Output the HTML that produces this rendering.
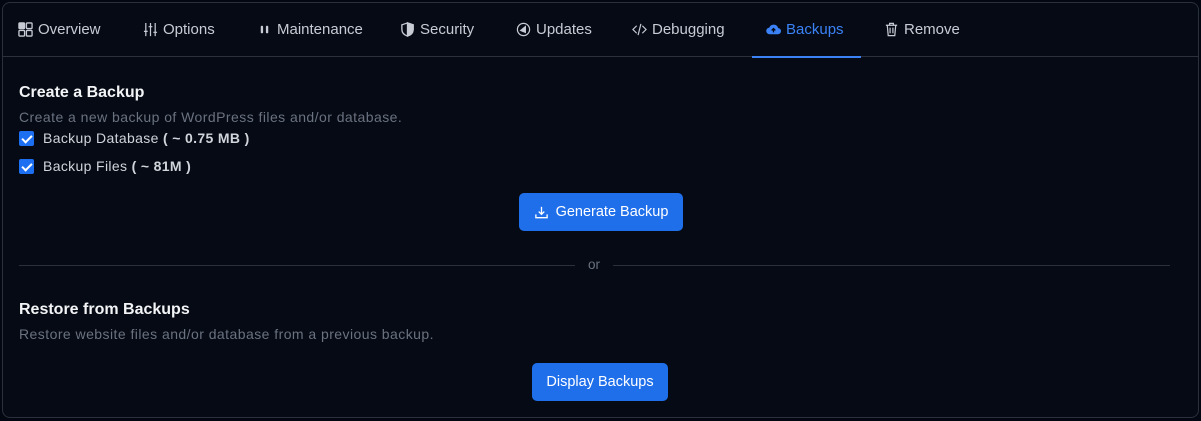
<!DOCTYPE html>
<html><head><style>
*{box-sizing:border-box;margin:0;padding:0}
body{width:1201px;height:421px;background:#030712;font-family:"Liberation Sans",sans-serif;overflow:hidden}
.card{position:absolute;left:2px;top:2px;width:1197px;height:416px;border:1px solid #2a313c;border-radius:8px;background:#050a14}
.tabs{position:absolute;left:0;top:0;width:100%;height:54px;border-bottom:1px solid #2a313c}
.tab{position:absolute;top:18px;font-size:15px;color:#c7ccd4;display:flex;align-items:center;gap:5px;white-space:nowrap}
.tab svg{width:15px;height:15px}
.active{color:#3b82f6}
.ul{position:absolute;left:749px;top:53px;width:109px;height:2px;background:#3b82f6}
h2{position:absolute;left:16px;font-size:16px;font-weight:bold;color:#f3f4f6}
.sub{position:absolute;left:16px;font-size:14px;letter-spacing:0.45px;color:#6b7280}
.cb{position:absolute;left:16px;font-size:14px;letter-spacing:0.35px;color:#d1d5db;display:flex;align-items:center;gap:9px}
.cb i{display:inline-block;width:15px;height:15px;background:#1d6ff2;border-radius:2px;position:relative}
.cb i:after{content:"";position:absolute;left:5px;top:2px;width:4px;height:8px;border:solid #fff;border-width:0 2px 2px 0;transform:rotate(45deg)}
.btn{position:absolute;background:#1f6feb;color:#fff;font-size:14.5px;border-radius:5px;display:flex;align-items:center;justify-content:center;gap:7px}
.hr{position:absolute;top:262px;height:1px;background:#2a313c}
</style></head><body>
<div class="card">
<div class="tabs">
<div class="tab" style="left:15px"><svg viewBox="0 0 16 16" fill="none" stroke="#c7ccd4" stroke-width="1.4"><rect x="1" y="1" width="6" height="6" rx="1" fill="#c7ccd4"/><rect x="9" y="1" width="6" height="6" rx="1"/><rect x="1" y="9" width="6" height="6" rx="1"/><rect x="9" y="9" width="6" height="6" rx="1"/></svg>Overview</div>
<div class="tab" style="left:140px"><svg viewBox="0 0 16 16" fill="none" stroke="#c7ccd4" stroke-width="1.3"><path d="M3 1v14M8 1v14M13 1v14M1 10h4M6 5h4M11 11h4"/></svg>Options</div>
<div class="tab" style="left:254px"><svg viewBox="0 0 16 16" fill="#c7ccd4"><rect x="4" y="4" width="2.5" height="8" rx="1"/><rect x="9.5" y="4" width="2.5" height="8" rx="1"/></svg>Maintenance</div>
<div class="tab" style="left:397px"><svg viewBox="0 0 16 16" fill="none" stroke="#c7ccd4" stroke-width="1.4"><path d="M8 1L2 3v5c0 4 3 6 6 7 3-1 6-3 6-7V3z"/><path d="M8 1v14c3-1 6-3 6-7V3z" fill="#c7ccd4"/></svg>Security</div>
<div class="tab" style="left:513px"><svg viewBox="0 0 16 16" fill="none" stroke="#c7ccd4" stroke-width="1.3"><circle cx="8" cy="8" r="6.5"/><path d="M5 9l5-4v6z" fill="#c7ccd4"/></svg>Updates</div>
<div class="tab" style="left:629px"><svg viewBox="0 0 16 16" fill="none" stroke="#c7ccd4" stroke-width="1.3"><path d="M5 4L1 8l4 4M11 4l4 4-4 4M9.5 2l-3 12"/></svg>Debugging</div>
<div class="tab active" style="left:763px"><svg viewBox="0 0 16 16"><path d="M4 13a3.5 3.5 0 0 1-.5-7A5 5 0 0 1 13 6.5a3.2 3.2 0 0 1-.5 6.5z" fill="#3b82f6"/><path d="M8 11V7M6 9l2-2 2 2" stroke="#050a14" stroke-width="1.4" fill="none"/></svg>Backups</div>
<div class="tab" style="left:881px"><svg viewBox="0 0 16 16" fill="none" stroke="#c7ccd4" stroke-width="1.3"><path d="M2 3.5h12M6 3.5V1.5h4v2M3.5 3.5l1 11h7l1-11M6.5 6v6M9.5 6v6"/></svg>Remove</div>
</div>
<div class="ul"></div>
<h2 style="top:81px">Create a Backup</h2>
<div class="sub" style="top:106px">Create a new backup of WordPress files and/or database.</div>
<div class="cb" style="top:127px"><i></i><span>Backup Database <b>( ~ 0.75 MB )</b></span></div>
<div class="cb" style="top:155px"><i></i><span>Backup Files <b>( ~ 81M )</b></span></div>
<div class="btn" style="left:516px;top:190px;width:164px;height:38px"><svg width="15" height="15" viewBox="0 0 16 16" fill="none" stroke="#fff" stroke-width="1.4"><path d="M8 2v8M5 7l3 3 3-3M2 10v3.5h12V10"/></svg>Generate Backup</div>
<div class="hr" style="left:16px;width:556px"></div>
<div style="position:absolute;left:585px;top:254px;font-size:13.5px;color:#6b7280">or</div>
<div class="hr" style="left:610px;width:557px"></div>
<h2 style="top:298px">Restore from Backups</h2>
<div class="sub" style="top:323px">Restore website files and/or database from a previous backup.</div>
<div class="btn" style="left:529px;top:360px;width:136px;height:38px">Display Backups</div>
</div>
</body></html>
